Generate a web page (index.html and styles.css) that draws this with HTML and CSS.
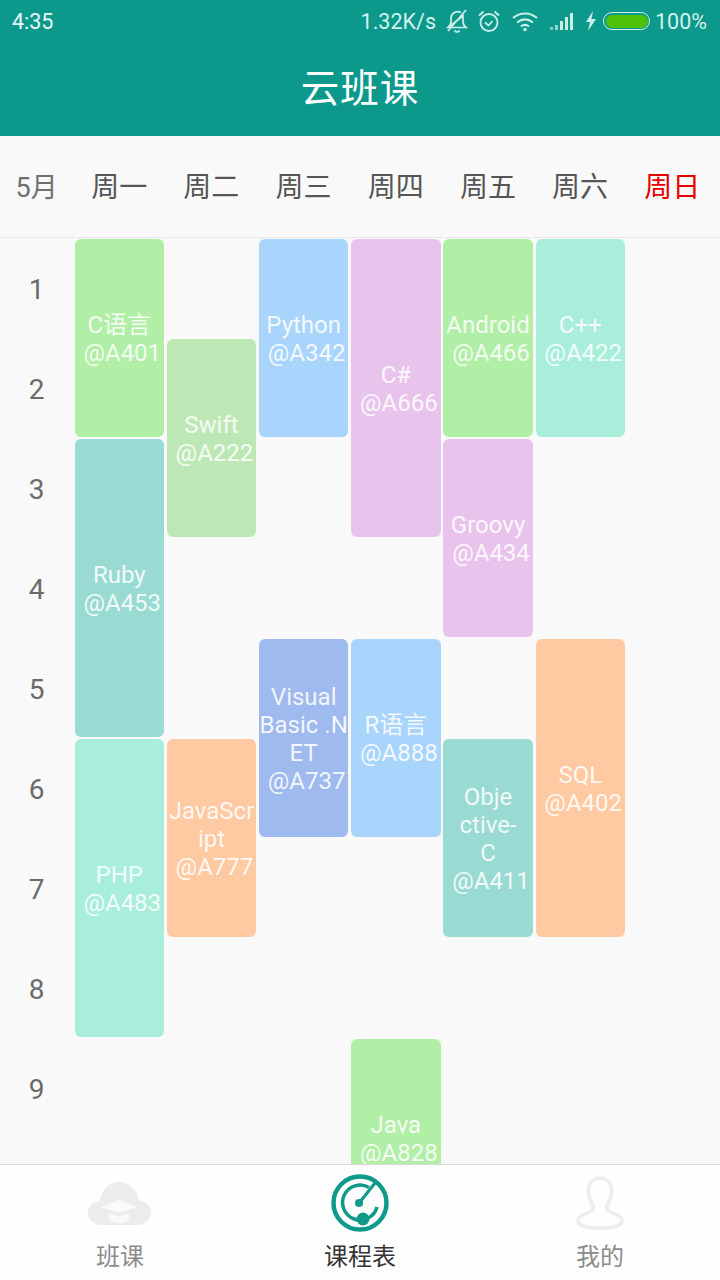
FILE: index.html
```html
<!DOCTYPE html>
<html lang="zh">
<head>
<meta charset="utf-8">
<title>云班课</title>
<link rel="stylesheet" href="styles.css">
</head>
<body>
<div class="app">
  <header class="top">
    <div class="status">
      <span class="clock">4:35</span>
      <div class="status-right">
        <span class="speed">1.32K/s</span>
        <svg class="ic-bell" width="24" height="26" viewBox="0 0 24 26" fill="none" stroke="#c9efe9" stroke-width="1.7"><path d="M3 19.5c2-1.5 3-3 3-6V10a6.5 6.5 0 0 1 10-5.2M18 8v5.5c0 3 1 4.500 3 6H3zM3 23 21 2M9.500 22.500c1 2 4 2 5 0"/></svg>
        <svg class="ic-alarm" width="24" height="24" viewBox="0 0 24 24" fill="none" stroke="#c9efe9" stroke-width="1.800"><circle cx="12" cy="13.500" r="8.500"/><path d="M8 13.500l3.500 3 4-4.500M2 6.500 6.500 2.500M22 6.500l-4.500-4"/></svg>
        <svg class="ic-wifi" width="28" height="22" viewBox="0 0 28 22" fill="none" stroke="#c9efe9" stroke-width="2.200"><path d="M2 8c7-6 17-6 24 0M6 12.500c5-4 11-4 16 0M10 16.500c2.500-2 5.500-2 8 0"/><circle cx="14" cy="19.500" r="1.800" fill="#c9efe9" stroke="none"/></svg>
        <svg class="ic-signal" width="26" height="20" viewBox="0 0 26 20" fill="#c9efe9"><rect x="1" y="16" width="3" height="3" opacity=".6"/><rect x="6" y="14" width="3" height="5" opacity=".7"/><rect x="11" y="10" width="3" height="9"/><rect x="16" y="6" width="3" height="13"/><rect x="21" y="2" width="3" height="17"/></svg>
        <svg class="ic-bolt" width="12" height="20" viewBox="0 0 12 20" fill="#c9efe9"><path d="M8 0 1 11h4l-2 9 8-12H6.500z"/></svg>
        <span class="battery"><span class="battery-fill"></span></span>
        <span class="pct">100%</span>
      </div>
    </div>
    <h1 class="title">云班课</h1>
  </header>

  <div class="week">
    <div class="month">5月</div>
    <div class="day">周一</div>
    <div class="day">周二</div>
    <div class="day">周三</div>
    <div class="day">周四</div>
    <div class="day">周五</div>
    <div class="day">周六</div>
    <div class="day sunday">周日</div>
  </div>

  <main class="table">
    <div class="num r1">1</div>
    <div class="num r2">2</div>
    <div class="num r3">3</div>
    <div class="num r4">4</div>
    <div class="num r5">5</div>
    <div class="num r6">6</div>
    <div class="num r7">7</div>
    <div class="num r8">8</div>
    <div class="num r9">9</div>

    <div class="card c1 r1 s2 green"><span>C语言<br>&nbsp;@A401</span></div>
    <div class="card c1 r3 s3 teal"><span>Ruby<br>&nbsp;@A453</span></div>
    <div class="card c1 r6 s3 mint"><span>PHP<br>&nbsp;@A483</span></div>
    <div class="card c2 r2 s2 sage"><span>Swift<br>&nbsp;@A222</span></div>
    <div class="card c2 r6 s2 orange"><span>JavaScr<br>ipt<br>&nbsp;@A777</span></div>
    <div class="card c3 r1 s2 blue"><span>Python<br>&nbsp;@A342</span></div>
    <div class="card c3 r5 s2 navy"><span>Visual<br>Basic .N<br>ET<br>&nbsp;@A737</span></div>
    <div class="card c4 r1 s3 purple"><span>C#<br>&nbsp;@A666</span></div>
    <div class="card c4 r5 s2 blue"><span>R语言<br>&nbsp;@A888</span></div>
    <div class="card c4 r9 s2 green"><span>Java<br>&nbsp;@A828</span></div>
    <div class="card c5 r1 s2 green"><span>Android<br>&nbsp;@A466</span></div>
    <div class="card c5 r3 s2 purple"><span>Groovy<br>&nbsp;@A434</span></div>
    <div class="card c5 r6 s2 teal"><span>Obje<br>ctive-<br>C<br>&nbsp;@A411</span></div>
    <div class="card c6 r1 s2 mint"><span>C++<br>&nbsp;@A422</span></div>
    <div class="card c6 r5 s3 orange"><span>SQL<br>&nbsp;@A402</span></div>
  </main>

  <nav class="tabs">
    <div class="tab">
      <svg class="tab-icon" width="64" height="50" viewBox="0 0 64 50"><path fill="#ececec" d="M13 47C6 47 0 41 0 35c0-7 5-12 12-12C13 12 21 4 31 4c10 0 19 8 20 19 7 0 12 5 12 12 0 6-6 12-13 12z"/><path fill="#fafafa" d="M31 22 49 29 31 35 13 29zM21 35l10 3.500 10-3.500v7c-4 4-16 4-20 0z"/></svg>
      <span class="tab-label">班课</span>
    </div>
    <div class="tab active">
      <svg class="tab-icon" width="60" height="60" viewBox="0 0 60 60" fill="none" stroke="#0f9a8c"><circle cx="30" cy="30" r="26.500" stroke-width="4.500"/><path stroke-width="3.500" d="M39 14.500A17.500 17.500 0 1 0 47 34"/><path stroke-width="3" d="M30 29 45 10"/><circle cx="29" cy="30" r="4" fill="#0f9a8c" stroke="none"/><circle cx="33" cy="46" r="6.500" fill="#0f9a8c" stroke="none"/></svg>
      <span class="tab-label">课程表</span>
    </div>
    <div class="tab">
      <svg class="tab-icon" width="48" height="52" viewBox="0 0 50 56" fill="none" stroke="#ededed" stroke-width="3.800"><path d="M25 2c-8 0-12 6-12 14 0 7 3 12 5 15 1 3-1 5-5 7-6 2-11 5-11 9 0 5 10 7 23 7s23-2 23-7c0-4-5-7-11-9-4-2-6-4-5-7 2-3 5-8 5-15 0-8-4-14-12-14z"/></svg>
      <span class="tab-label">我的</span>
    </div>
  </nav>
</div>
</body>
</html>
```

FILE: styles.css
```css
* { box-sizing: border-box; }
html, body { margin: 0; padding: 0; }
body {
  width: 720px;
  height: 1280px;
  overflow: hidden;
  font-family: Roboto, "Noto Sans CJK SC", sans-serif;
  background: #f9f9f9;
}
.app {
  display: flex;
  flex-direction: column;
  height: 1280px;
}
.top {
  flex: 0 0 136px;
  background: #0c998c;
  color: #fff;
}
.status {
  height: 44px;
  display: flex;
  align-items: center;
  justify-content: space-between;
  padding: 0 13px 2px 12px;
  font-size: 21.5px;
  color: #d3f2ed;
}
.clock { color: #e8f8f5; }
.status-right {
  display: flex;
  align-items: center;
}
.ic-bell { margin-left: 9px; }
.ic-alarm { margin-left: 8px; }
.ic-wifi { margin-left: 10px; }
.ic-signal { margin-left: 10px; }
.ic-bolt { margin-left: 10px; }
.battery {
  width: 47px;
  height: 18px;
  margin-left: 6px;
  border: 1.5px solid #c9efe9;
  border-radius: 9px;
  padding: 1.5px;
  display: flex;
}
.battery-fill {
  flex: 1;
  border-radius: 7px;
  background: #4fc109;
}
.pct { margin-left: 5px; }
.title {
  margin: 0;
  height: 92px;
  line-height: 90px;
  text-align: center;
  font-size: 38.5px;
  font-weight: 400;
  letter-spacing: 1px;
}
.week {
  flex: 0 0 102px;
  display: grid;
  grid-template-columns: 73.1px repeat(7, 92.2px);
  align-items: center;
  border-bottom: 1px solid #e8e8e8;
  padding-bottom: 3px;
  font-size: 28px;
  color: #555;
  text-align: center;
}
.month { font-size: 27px; color: #707070; }
.sunday { color: #e60000; }
.table {
  flex: 1;
  min-height: 0;
  overflow: hidden;
  display: grid;
  grid-template-columns: 73.1px repeat(7, 92.2px);
  grid-auto-rows: 100px;
}
.num {
  grid-column: 1;
  align-self: center;
  padding-top: 2px;
  text-align: center;
  font-size: 28px;
  color: #6b6b6b;
}
.card {
  margin: 1px 1.3px 1px 1.5px;
  padding-top: 2px;
  border-radius: 6px;
  display: flex;
  align-items: center;
  justify-content: center;
  text-align: center;
  font-size: 24px;
  line-height: 28px;
  color: rgba(255, 255, 255, .88);
  white-space: nowrap;
  overflow: hidden;
}
.r1 { grid-row-start: 1; }
.r2 { grid-row-start: 2; }
.r3 { grid-row-start: 3; }
.r4 { grid-row-start: 4; }
.r5 { grid-row-start: 5; }
.r6 { grid-row-start: 6; }
.r7 { grid-row-start: 7; }
.r8 { grid-row-start: 8; }
.r9 { grid-row-start: 9; }
.s2 { grid-row-end: span 2; }
.s3 { grid-row-end: span 3; }
.c1 { grid-column: 2; }
.c2 { grid-column: 3; }
.c3 { grid-column: 4; }
.c4 { grid-column: 5; }
.c5 { grid-column: 6; }
.c6 { grid-column: 7; }
.green { background: #b1eea6; }
.teal { background: #99dad3; }
.mint { background: #a8eedb; }
.sage { background: #bde8b6; }
.orange { background: #ffc9a2; }
.blue { background: #a9d4fb; }
.navy { background: #9fbaee; }
.purple { background: #e8c4ec; }
.tabs {
  flex: 0 0 116px;
  display: grid;
  grid-template-columns: repeat(3, 240px);
  background: #fefefe;
  border-top: 1px solid #d8d8d8;
  position: relative;
  z-index: 1;
}
.tab {
  display: flex;
  flex-direction: column;
  align-items: center;
  height: 115px;
}
.tab-icon {
  flex: 0 0 60px;
  margin-top: 8px;
}
.tab-label {
  margin-top: 8px;
  font-size: 24px;
  line-height: 32px;
  color: #8c8c8c;
}
.active .tab-label { color: #333; }
```
